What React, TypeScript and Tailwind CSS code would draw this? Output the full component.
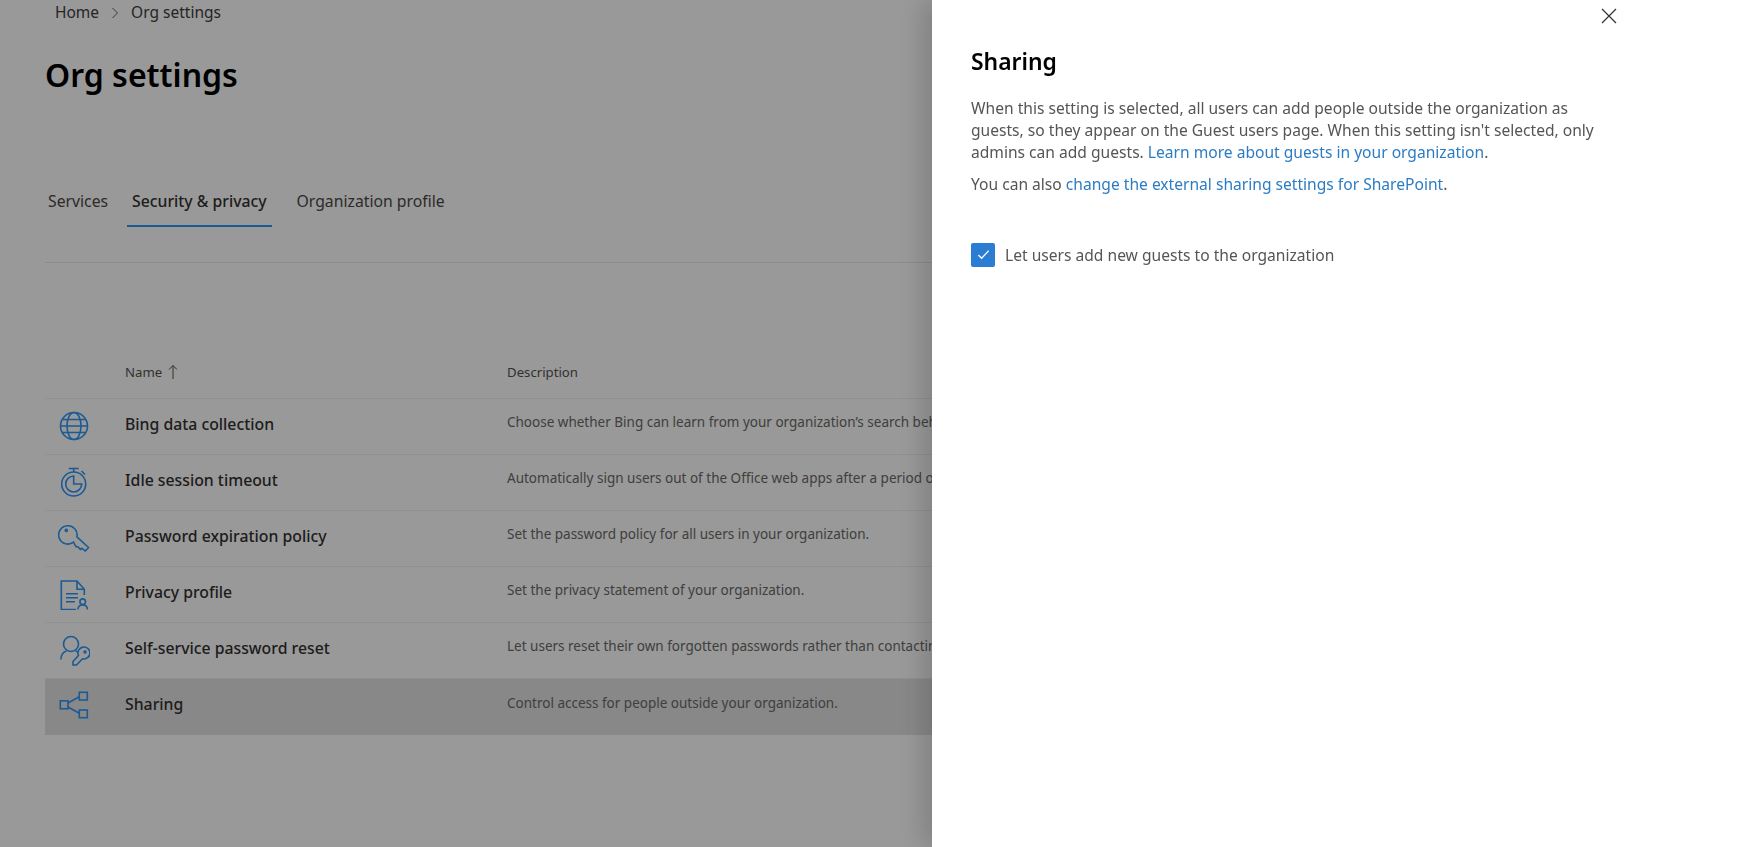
const font = { fontFamily: '"Noto Sans", "Open Sans", sans-serif' };
const iconClass = "h-[32px] w-[32px] fill-none stroke-[#3096f5] stroke-[1.6]";

function GlobeIcon() {
  return (
    <svg viewBox="0 0 32 32" className={iconClass}>
      <circle cx="16" cy="16" r="13.5" />
      <ellipse cx="16" cy="16" rx="7" ry="13.5" />
      <path d="M4 9.500h24M4 22.500h24M2.500 16h27" />
    </svg>
  );
}

function TimerIcon() {
  return (
    <svg viewBox="0 0 32 32" className={iconClass}>
      <circle cx="15.700" cy="18" r="12" />
      <path d="M15.700 18h8a8 8 0 1 1-8-8z" />
      <path d="M10.700 2.500h10M15.700 2.500v3.500M23.500 5l3.500 3.500" />
    </svg>
  );
}

function KeyIcon() {
  return (
    <svg viewBox="0 0 32 32" className={iconClass}>
      <path d="M18.900 14.800L30.500 25.500 27.300 29 24 26.300 22.300 27.500 20 24.700H18L15.500 20.200A9.200 9.200 0 1 1 18.900 14.800z" />
      <circle cx="8.300" cy="8.300" r="1.100" />
    </svg>
  );
}

function DocUserIcon() {
  return (
    <svg viewBox="0 0 32 32" className={iconClass}>
      <path d="M18 31.500H3.300V3H19l7.300 8.300V17M19 3v8.300h7.300" />
      <path d="M8 15.700h12M8 19.700h12M8 23.700h9" />
      <circle cx="24.700" cy="23.700" r="2.800" />
      <path d="M20 31.500c0-3 2-4.500 4.700-4.500s4.700 1.500 4.700 4.500" />
    </svg>
  );
}

function UserKeyIcon() {
  return (
    <svg viewBox="0 0 32 32" className={iconClass}>
      <circle cx="13" cy="10" r="7.500" />
      <path d="M3 25.500c0-4.500 2-7.500 5.500-8.500M17.500 17c1 .3 1.500.5 2.500 1" />
      <path d="M20.500 21.500L15 27.500V31h3.500l6-6.200A6 6 0 1 0 20.500 21.500z" />
      <circle cx="27" cy="18" r="1" />
    </svg>
  );
}

function ShareIcon() {
  return (
    <svg viewBox="0 0 32 32" className={iconClass}>
      <rect x="2.300" y="10.800" width="7.700" height="8" />
      <rect x="21.300" y="2.300" width="8" height="7.700" />
      <rect x="21.300" y="20" width="8" height="7.700" />
      <path d="M10 13l11.300-6.300M10 17l11.300 6.300" />
    </svg>
  );
}

const rows = [
  { name: "Bing data collection", desc: "Choose whether Bing can learn from your organization\u2019s search behavior to improve results.", icon: <GlobeIcon /> },
  { name: "Idle session timeout", desc: "Automatically sign users out of the Office web apps after a period of inactivity.", icon: <TimerIcon /> },
  { name: "Password expiration policy", desc: "Set the password policy for all users in your organization.", icon: <KeyIcon /> },
  { name: "Privacy profile", desc: "Set the privacy statement of your organization.", icon: <DocUserIcon /> },
  { name: "Self-service password reset", desc: "Let users reset their own forgotten passwords rather than contacting your admin.", icon: <UserKeyIcon /> },
  { name: "Sharing", desc: "Control access for people outside your organization.", icon: <ShareIcon />, selected: true },
];

export default function App() {
  return (
    <div style={font} className="relative h-screen w-full overflow-hidden bg-white text-[#323130]">
      <div className="pl-[45px]">
        <div className="flex h-[24px] items-center pt-[2px] pl-[10px] text-[15.500px] text-[#403e3c]">
          <span>Home</span>
          <svg viewBox="0 0 12 12" className="mx-[10px] h-[12px] w-[12px] fill-none stroke-[#605e5c] stroke-1">
            <path d="M3.500 1l5 5-5 5" />
          </svg>
          <span>Org settings</span>
        </div>
        <h1 className="mt-[29px] h-[44px] text-[32px] leading-[44px] font-semibold text-black">Org settings</h1>
        <div className="mt-[86px] flex h-[44px] items-stretch text-[15.750px] text-[#4a4846]">
          <div className="flex items-center px-[3px] pb-[6px]">Services</div>
          <div className="ml-[16px] flex items-center border-b-2 border-[#3096f5] px-[5px] pb-[4px] font-medium text-[#323130]">Security &amp; privacy</div>
          <div className="ml-[25px] flex items-center pb-[6px]">Organization profile</div>
        </div>
        <div className="mt-[35px] h-px bg-[#e8e8e8]" />
        <div className="mt-[80px] flex h-[56px] items-center border-b border-[#f0f0f0] pt-[4px] text-[13.200px] text-[#55534f]">
          <div className="flex w-[462px] items-center pl-[80px]">
            <span>Name</span>
            <svg viewBox="0 0 12 16" className="ml-[5px] h-[16px] w-[12px] fill-none stroke-[#55534f] stroke-1">
              <path d="M6 15V1.500M2 5.500l4-4 4 4" />
            </svg>
          </div>
          <span>Description</span>
        </div>
        {rows.map((row) => (
          <div
            key={row.name}
            className={
              row.selected
                ? "flex h-[56px] items-center whitespace-nowrap bg-[#e3e3e3]"
                : "flex h-[56px] items-center whitespace-nowrap border-b border-[#f0f0f0]"
            }
          >
            <div className="flex w-[80px] justify-center pr-[22px] pb-[2px]">{row.icon}</div>
            <div className="w-[382px] pb-[4px] text-[15.800px] font-medium">{row.name}</div>
            <div className="pb-[8px] text-[13.500px] text-[#6b6967]">{row.desc}</div>
          </div>
        ))}
      </div>

      <div className="fixed inset-0 bg-black/40" />

      <div className="fixed top-0 right-0 bottom-0 w-[807px] bg-white pl-[39px] text-[#555] shadow-[-10px_0_24px_rgba(0,0,0,0.16)]">
        <button className="absolute top-[7px] right-[121px]">
          <svg viewBox="0 0 18 18" className="h-[18px] w-[18px] fill-none stroke-[#323130] stroke-[1.2]">
            <path d="M2 2l14 14M16 2L2 16" />
          </svg>
        </button>
        <h2 className="pt-[45px] text-[22.900px] leading-[34px] font-semibold text-black">Sharing</h2>
        <p className="mt-[18px] w-[640px] text-[15.600px] leading-[22px]">
          When this setting is selected, all users can add people outside the organization as guests, so they appear on the Guest users page. When this setting isn't selected, only admins can add guests.{" "}
          <a className="text-[#2b7cc4]">Learn more about guests in your organization</a>.
        </p>
        <p className="mt-[10px] text-[15.600px] leading-[22px]">
          You can also <a className="text-[#2b7cc4]">change the external sharing settings for SharePoint</a>.
        </p>
        <label className="mt-[47px] flex items-center text-[15.600px]">
          <span className="flex h-[24px] w-[24px] items-center justify-center rounded-[2px] bg-[#2b7cd3]">
            <svg viewBox="0 0 16 16" className="h-[15px] w-[15px] fill-none stroke-white stroke-[1.3]">
              <path d="M2.500 8.500l3.500 3.500 7.500-8" />
            </svg>
          </span>
          <span className="ml-[10px] pt-[2px]">Let users add new guests to the organization</span>
        </label>
      </div>
    </div>
  );
}
